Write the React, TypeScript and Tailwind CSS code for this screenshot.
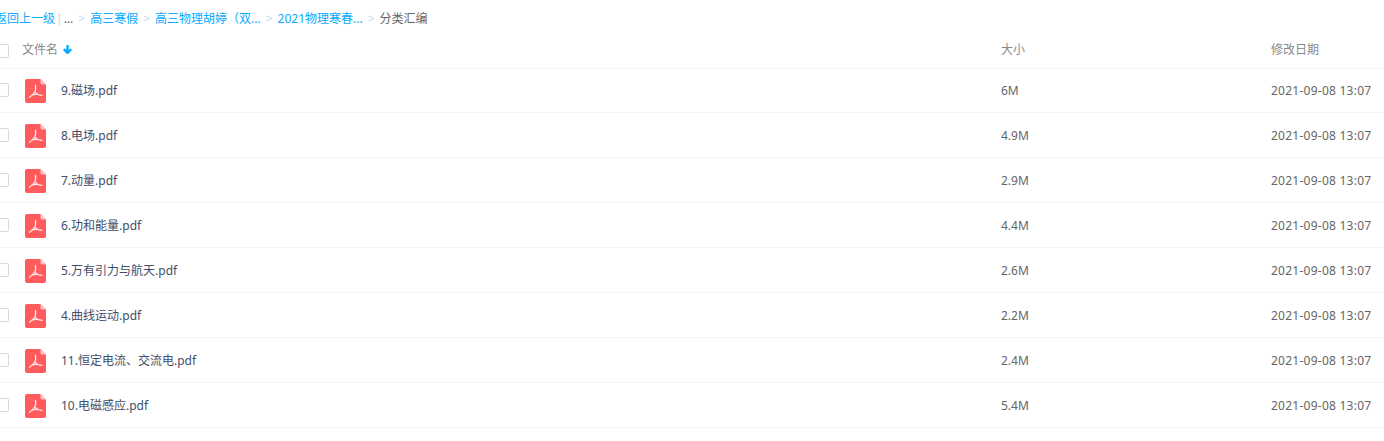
import React from "react";

const files = [
  { name: "9.磁场.pdf", size: "6M" },
  { name: "8.电场.pdf", size: "4.9M" },
  { name: "7.动量.pdf", size: "2.9M" },
  { name: "6.功和能量.pdf", size: "4.4M" },
  { name: "5.万有引力与航天.pdf", size: "2.6M" },
  { name: "4.曲线运动.pdf", size: "2.2M" },
  { name: "11.恒定电流、交流电.pdf", size: "2.4M" },
  { name: "10.电磁感应.pdf", size: "5.4M" },
];

const crumbs = ["高三寒假", "高三物理胡婷（双...", "2021物理寒春..."];

const PdfIcon = () => (
  <svg width="21" height="24" viewBox="0 0 21 24" className="block shrink-0">
    <path d="M2 0H15.5L21 5.5V22a2 2 0 0 1-2 2H2a2 2 0 0 1-2-2V2a2 2 0 0 1 2-2Z" fill="#ff5a5c" />
    <path d="M15.5 0L21 5.5H17a1.5 1.5 0 0 1-1.5-1.5Z" fill="#ffc4c4" />
    <path
      d="M10.5 6.5C11 9 10.6 11.2 9.8 13.2M9.8 13.2C8.6 15.2 6.8 16.8 4.5 18.2M9.8 13.2C11.5 15.2 14 16.2 17 16.4M6.5 16.4C8.5 15.4 11 15 13.5 15.6"
      fill="none"
      stroke="#ffe6e6"
      strokeWidth="1.3"
      strokeLinecap="round"
    />
  </svg>
);

const Checkbox = ({ className = "" }: { className?: string }) => (
  <span className={`block w-[14px] h-[14px] ml-[-5px] shrink-0 rounded-[2px] border border-[#d6d9e0] bg-white ${className}`} />
);

export default function App() {
  return (
    <div className="w-[1384px] h-[441px] overflow-hidden bg-white text-[12px] font-['Noto_Sans','Noto_Sans_CJK_SC',sans-serif]">
      {/* breadcrumb */}
      <div className="h-[37px] pt-[10px] flex items-start leading-[17px] text-[#09aaff] whitespace-nowrap ml-[-5px]">
        <span>返回上一级</span>
        <span className="mx-[1px] text-[#c4d8f4]">|</span>
        <span className="text-[#666]">...</span>
        {crumbs.map((c) => (
          <React.Fragment key={c}>
            <span className="mx-[5px] text-[#c4d8f4]">&gt;</span>
            <span>{c}</span>
          </React.Fragment>
        ))}
        <span className="mx-[5px] text-[#c4d8f4]">&gt;</span>
        <span className="text-[#666]">分类汇编</span>
      </div>

      {/* header */}
      <div className="h-[32px] flex items-start border-b border-[#f2f6fd] text-[#888]">
        <div className="w-[1001px] h-[26px] flex items-center">
          <Checkbox className="mt-[2px]" />
          <span className="ml-[13px]">文件名</span>
          <svg width="9" height="9" viewBox="0 0 9 9" className="ml-[5px] mb-[2px] text-[#09aaff]">
            <path d="M4.5 0V8M0.8 4.2L4.5 8L8.2 4.2" fill="none" stroke="currentColor" strokeWidth="2.4" />
          </svg>
        </div>
        <div className="w-[270px] h-[26px] flex items-center">大小</div>
        <div className="h-[26px] flex items-center">修改日期</div>
      </div>

      {/* rows */}
      <div className="mt-[-1px]">
        {files.map((f) => (
          <div key={f.name} className="h-[45px] flex items-center border-b border-[#f2f6fd] text-[#666]">
            <div className="w-[1001px] flex items-center">
              <Checkbox />
              <span className="ml-[16px] mt-[2px]">
                <PdfIcon />
              </span>
              <span className="ml-[15px] mt-[2px] text-[#424e67]">{f.name}</span>
            </div>
            <div className="w-[270px] mt-[2px]">{f.size}</div>
            <div className="mt-[2px] tracking-[0.25px]">2021-09-08 13:07</div>
          </div>
        ))}
      </div>
    </div>
  );
}
